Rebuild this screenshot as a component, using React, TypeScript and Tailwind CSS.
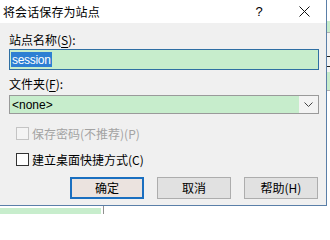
import React from "react";

const F = "[font-family:'Noto_Sans_CJK_SC','Microsoft_YaHei',sans-serif]";

export default function App() {
  return (
    <div className="relative w-[330px] h-[214px] overflow-hidden bg-white text-[12px] leading-none text-black [font-family:'Noto_Sans_CJK_SC',sans-serif]">
      {/* background app on right */}
      <div className="absolute right-0 top-0 w-[4px] h-[214px] flex flex-col">
        <div className="h-[21px] bg-white" />
        <div className="h-[11px] bg-[#c7edcc]" />
        <div className="h-[1px] bg-[#b0b0b0]" />
        <div className="h-[23px] bg-[#f4f4f4]" />
        <div className="h-[1px] bg-[#222]" />
        <div className="h-[9px] bg-[#f4f4f4]" />
        <div className="h-[1px] bg-[#222]" />
        <div className="h-[5px] bg-[#f4f4f4]" />
        <div className="h-[18px] bg-[#c7edcc]" />
        <div className="h-[1px] bg-[#b0b0b0]" />
        <div className="flex-1 bg-white" />
      </div>
      {/* background app on bottom */}
      <div className="absolute left-0 bottom-0 w-[330px] h-[8px] flex items-end">
        <div className="w-[101px] h-[6px] bg-[#c7edcc]" />
        <div className="w-[2px] h-[6px] bg-white" />
        <div className="w-[1px] h-[8px] bg-[#909090]" />
      </div>

      {/* dialog */}
      <div className="relative w-[327px] h-[206px] flex flex-col border-r border-b border-[#5a7fa8] bg-[#f0f0f0]">
        {/* title bar */}
        <div className="h-[23px] bg-white flex items-center">
          <span className="pl-[3px] text-[12px] leading-[14px] tracking-[0.1px]">将会话保存为站点</span>
          <div className="ml-auto flex h-full">
            <div className="w-[46px] h-full flex items-center justify-center pb-[1px]">
              <span className="text-[13px] leading-none [font-family:'Liberation_Sans',sans-serif]">?</span>
            </div>
            <div className="w-[44px] h-full flex items-center justify-center pb-[1px]">
              <svg width="11" height="11" viewBox="0 0 11 11">
                <path d="M0.5 0.5 L10.5 10.5 M10.5 0.5 L0.5 10.5" stroke="#111" strokeWidth="1" fill="none" />
              </svg>
            </div>
          </div>
        </div>

        {/* body */}
        <div className="flex flex-col pl-[9px] pr-[7px]">
          <div className="mt-[9px] h-[16px] flex items-center">
            <span>站点名称(<span className="underline underline-offset-2">S</span>):</span>
          </div>
          <div className="mt-[1px] h-[21px] border border-[#2f6fa3] bg-[#c7edcc] flex items-center pl-[1px]">
            <span className="bg-[#2d7fd3] text-white h-[15px] px-[1px] flex items-center text-[12px] [font-family:'Liberation_Sans',sans-serif] tracking-[-0.3px]">session</span>
          </div>

          <div className="mt-[6px] h-[16px] flex items-center">
            <span>文件夹(<span className="underline underline-offset-2">F</span>):</span>
          </div>
          <div className="mt-[3px] h-[19px] border border-[#9a9a9a] bg-[#c7edcc] flex items-center">
            <span className="pl-[2px] text-[12px] [font-family:'Liberation_Sans',sans-serif]">&lt;none&gt;</span>
            <div className="ml-auto w-[19px] h-full bg-[#f3f3f3] flex items-center justify-center">
              <svg width="9" height="6" viewBox="0 0 9 6">
                <path d="M0.5 0.5 L4.5 4.5 L8.5 0.5" stroke="#444" strokeWidth="1" fill="none" />
              </svg>
            </div>
          </div>

          <div className="mt-[13px] h-[13px] flex items-center pl-[7px]">
            <div className="w-[13px] h-[13px] border border-[#c4c4c4] bg-[#f4f4f4]" />
            <span className="ml-[3px] text-[#a3a3a3]">保存密码(不推荐)(P)</span>
          </div>
          <div className="mt-[13px] h-[13px] flex items-center pl-[7px]">
            <div className="w-[13px] h-[13px] border border-[#333] bg-white" />
            <span className="ml-[3px]">建立桌面快捷方式(C)</span>
          </div>

          <div className="mt-[11px] flex justify-end gap-[13px] pr-[1px]">
            <div className="w-[74px] h-[22px] border-2 border-[#1a6fc0] bg-[#ebe3df] flex items-center justify-center">确定</div>
            <div className="w-[74px] h-[22px] border border-[#adadad] bg-[#e1e1e1] flex items-center justify-center">取消</div>
            <div className="w-[74px] h-[22px] border border-[#adadad] bg-[#e1e1e1] flex items-center justify-center">帮助(H)</div>
          </div>
        </div>
      </div>
    </div>
  );
}
